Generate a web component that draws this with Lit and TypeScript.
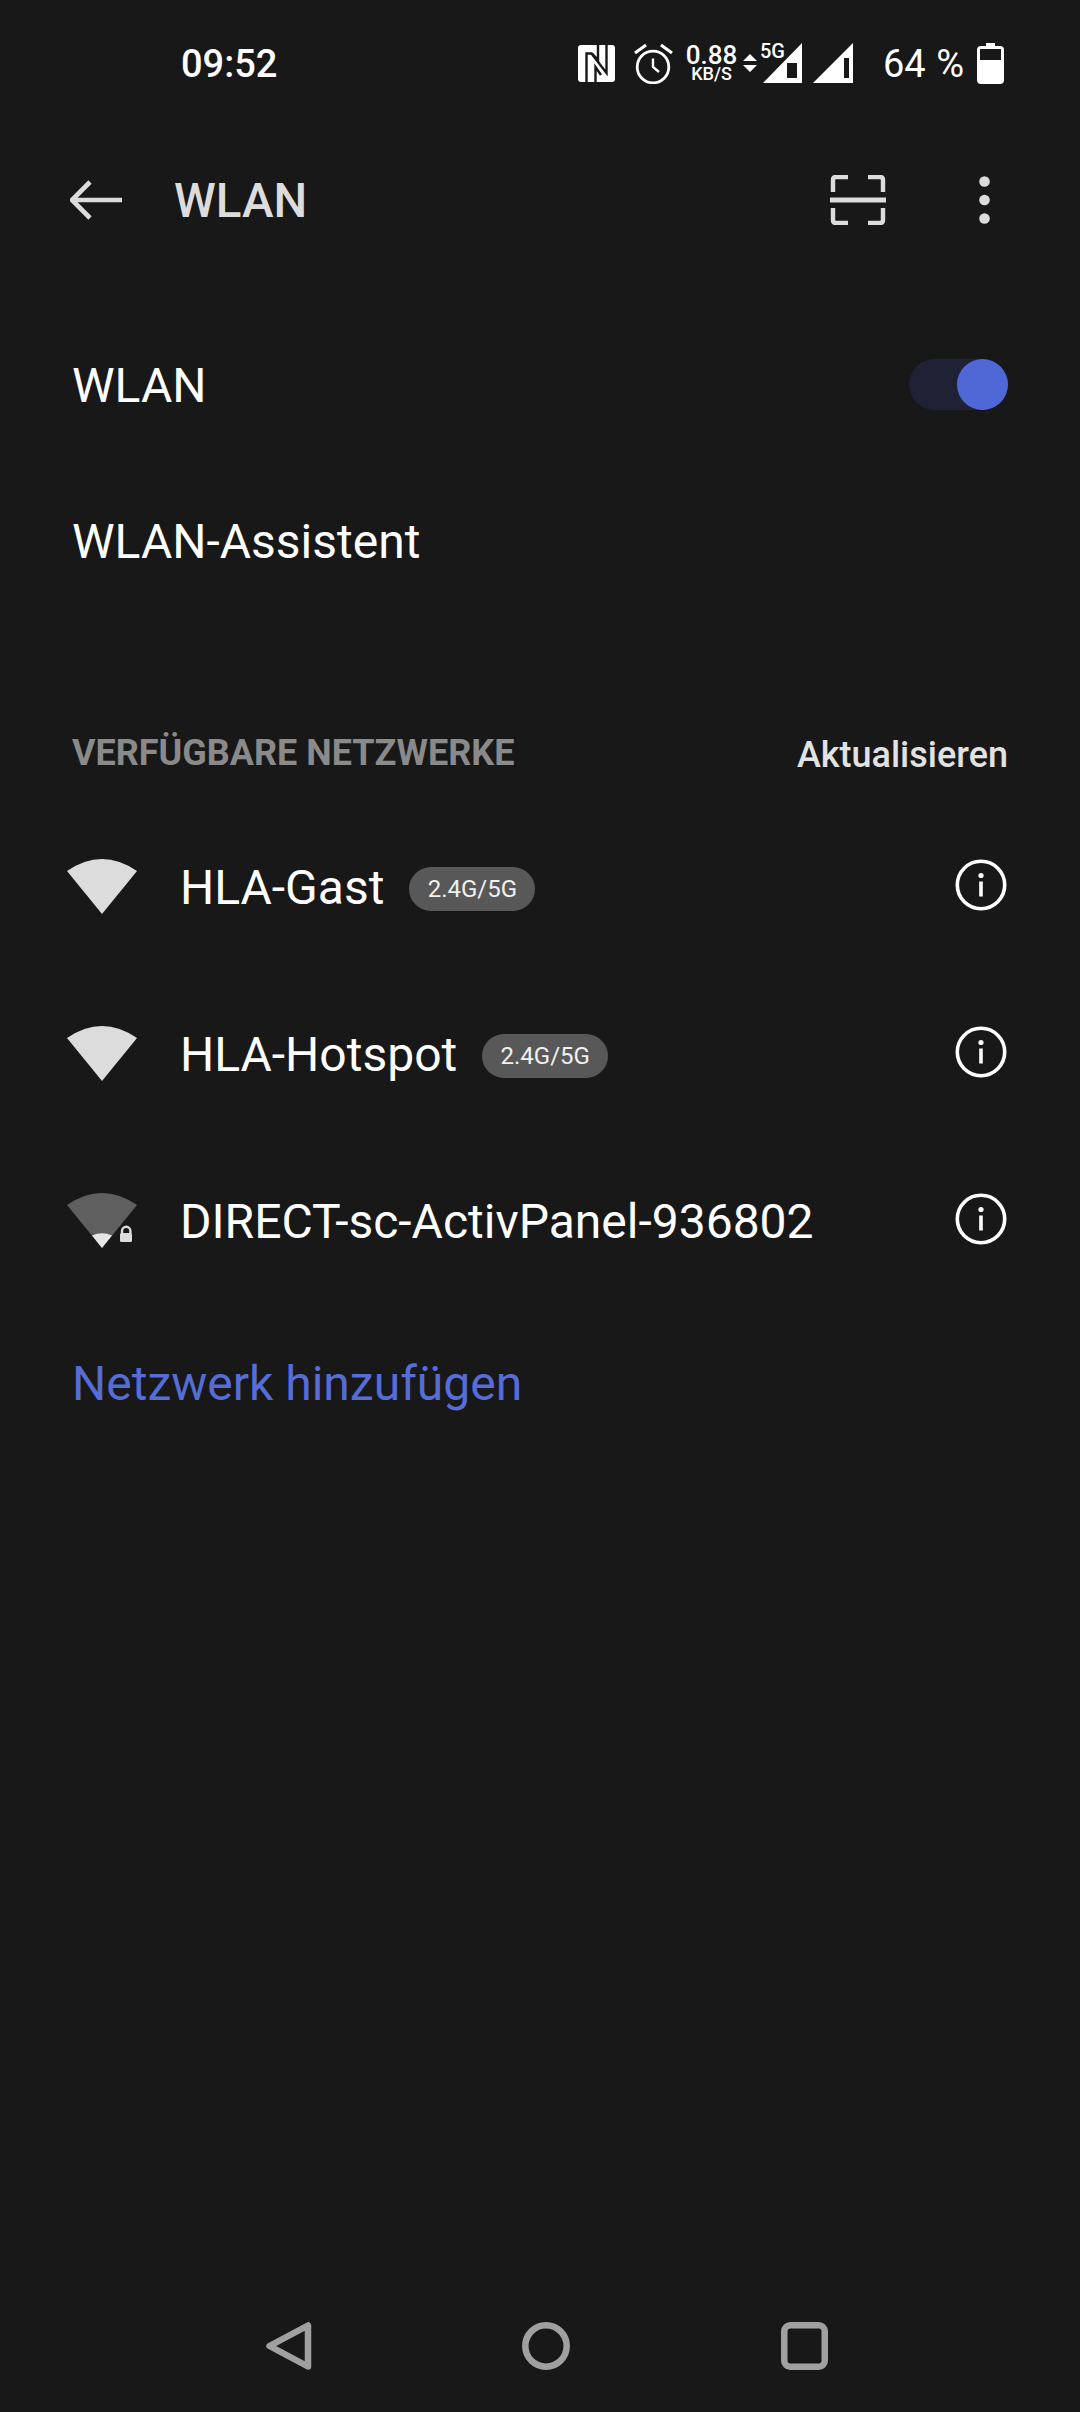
import { LitElement, html, css, svg } from "lit";
import { customElement } from "lit/decorators.js";

const wifiFull = svg`<path d="M0 12 Q35 -12 70 12 L35 55 Z" fill="#dcdcdc"/>`;
const wifiWeak = svg`<path d="M0 12 Q35 -12 70 12 L35 55 Z" fill="#5f5f5f"/>
  <path d="M25 42.5 Q35 38 45 42.5 L35 55 Z" fill="#e6e6e6"/>
  <path d="M55 41 v-3 a4.2 4.2 0 0 1 8.4 0 v3" fill="none" stroke="#dcdcdc" stroke-width="2.4"/>
  <rect x="53" y="40" width="12" height="9" rx="1.5" fill="#dcdcdc"/>`;

@customElement("app-root")
export class AppRoot extends LitElement {
  static styles = css`
    :host {
      display: flex;
      flex-direction: column;
      width: 1080px;
      height: 2412px;
      background: #181818;
      color: #fff;
      font-family: Roboto, "Noto Sans", sans-serif;
      overflow: hidden;
    }
    svg { display: block; flex: none; }
    .status {
      height: 126px;
      display: flex;
      align-items: center;
      padding: 0 76px 0 181px;
      box-sizing: border-box;
    }
    .time { font-size: 38px; font-weight: 500; color: #fff; flex: 1; margin-top: 2px; }
    .nfc { margin-right: 19px; }
    .alarm { margin-right: 13px; }
    .speed {
      display: flex;
      flex-direction: column;
      align-items: center;
      width: 51px;
      margin-right: 6px;
    }
    .speed b { font-size: 26px; font-weight: 500; height: 22px; line-height: 22px; }
    .speed i { font-style: normal; font-weight: 500; font-size: 18px; height: 16px; line-height: 16px; }
    .arrows { margin-right: 3px; }
    .net { position: relative; margin-right: 10px; }
    .five-g {
      position: absolute;
      left: 0;
      top: -1px;
      font-size: 20px;
      line-height: 18px;
      font-weight: 500;
    }
    .sim2 { margin-right: 30px; }
    .pct { font-size: 38px; font-weight: 400; width: 81px; margin-right: 13px; margin-top: 2px; white-space: nowrap; word-spacing: 1px; }
    .header {
      height: 148px;
      display: flex;
      align-items: center;
      padding: 0 90px 0 70px;
      box-sizing: border-box;
    }
    .title {
      margin-left: 52px;
      margin-top: 2px;
      font-size: 47.5px;
      font-weight: 500;
      color: #dcdcdc;
      flex: 1;
    }
    .scan { margin-right: 93px; }
    .row {
      display: flex;
      align-items: center;
      justify-content: space-between;
      padding: 0 72px;
      font-size: 48px;
      height: 156px;
      box-sizing: border-box;
    }
    .first { margin-top: 33px; }
    .track {
      width: 99px;
      height: 51px;
      border-radius: 26px;
      background: #1f2235;
      display: flex;
      justify-content: flex-end;
      margin-bottom: 2px;
    }
    .knob { width: 51px; height: 51px; border-radius: 50%; background: #4f68d6; }
    .section {
      height: 185px;
      box-sizing: border-box;
      padding: 0 72px 30px;
      display: flex;
      align-items: flex-end;
      justify-content: space-between;
    }
    .section-title { font-size: 36px; font-weight: 700; color: #8a8a8a; }
    .refresh { font-size: 36px; font-weight: 500; color: #e2e2e2; margin-bottom: -2px; }
    .net-row {
      height: 167px;
      display: flex;
      align-items: center;
      padding: 0 73px 0 67px;
      box-sizing: border-box;
      font-size: 48px;
    }
    .wifi { margin-right: 43px; margin-bottom: 2px; }
    .name { white-space: nowrap; }
    .badge {
      margin-left: 25px;
      margin-top: 2px;
      height: 44px;
      width: 126px;
      border-radius: 22px;
      background: #585858;
      font-size: 24px;
      display: flex;
      align-items: center;
      justify-content: center;
      color: #f0f0f0;
    }
    .info { margin-left: auto; margin-bottom: 6px; }
    .add {
      height: 156px;
      display: flex;
      align-items: center;
      padding-left: 72px;
      font-size: 48px;
      color: #566cd6;
    }
    .nav {
      margin-top: auto;
      height: 132px;
      display: flex;
      padding: 0 0 42px 266px;
      box-sizing: border-box;
      align-items: flex-end;
    }
    .nav .home { margin-left: 210px; }
    .nav .recent { margin-left: 211px; }
  `;

  private network(name: string, weak: boolean, badge: boolean) {
    return html`<div class="net-row">
      <svg class="wifi" width="70" height="56" viewBox="0 0 70 56">${weak ? wifiWeak : wifiFull}</svg>
      <span class="name">${name}</span>
      ${badge ? html`<span class="badge">2.4G/5G</span>` : ""}
      <svg class="info" width="52" height="52" viewBox="0 0 52 52" fill="none">
        <circle cx="26" cy="26" r="23.7" stroke="#fff" stroke-width="3.6"/>
        <circle cx="26" cy="16.5" r="2.6" fill="#fff"/>
        <rect x="24.2" y="22.5" width="3.6" height="15" fill="#fff"/>
      </svg>
    </div>`;
  }

  render() {
    return html`
      <div class="status">
        <span class="time">09:52</span>
        <svg class="nfc" width="37" height="37" viewBox="0 0 37 37">
          <rect width="37" height="37" rx="3" fill="#fff"/>
          <path d="M8.5 37V8.5H13.5L28.5 28V0" fill="none" stroke="#181818" stroke-width="2.4"/>
          <path d="M17.5 37V22L23 30M20 0V15L14 8.5" fill="none" stroke="#181818" stroke-width="2.4"/>
        </svg>
        <svg class="alarm" width="39" height="41" viewBox="0 0 39 41" fill="none" stroke="#fff">
          <circle cx="19" cy="24" r="15.8" stroke-width="2.8"/>
          <path d="M19 15.5V24L25 29" stroke-width="2.4"/>
          <path d="M1 10L12 2M27 2L38 10" stroke-width="3"/>
        </svg>
        <div class="speed"><b>0.88</b><i>KB/S</i></div>
        <svg class="arrows" width="14" height="30" viewBox="0 0 14 30">
          <path d="M7 6L14 13H0ZM0 17H14L7 24Z" fill="#fff"/>
        </svg>
        <div class="net">
          <svg width="43" height="40" viewBox="0 0 43 40">
            <path d="M3 40L42 0V40ZM27 35H37V20H27Z" fill="#fff" fill-rule="evenodd"/>
          </svg>
          <span class="five-g">5G</span>
        </div>
        <svg class="sim2" width="40" height="40" viewBox="0 0 40 40">
          <path d="M0 40L40 0V40ZM31 35H36V15H31Z" fill="#fff" fill-rule="evenodd"/>
        </svg>
        <span class="pct">64 %</span>
        <svg width="27" height="41" viewBox="0 0 27 41">
          <path d="M9 0H18V3H23Q27 3 27 7V37Q27 41 23 41H4Q0 41 0 37V7Q0 3 4 3H9Z" fill="#fff"/>
          <rect x="3" y="6" width="21" height="11" fill="#181818"/>
        </svg>
      </div>

      <div class="header">
        <svg width="52" height="40" viewBox="0 0 52 40" fill="none" stroke="#dcdcdc" stroke-width="4.6">
          <path d="M52 20H3M20 2L2 20L20 38"/>
        </svg>
        <span class="title">WLAN</span>
        <svg class="scan" width="56" height="50" viewBox="0 0 56 50" fill="none" stroke="#dcdcdc">
          <path d="M18 2H6Q3 2 3 5V17M38 2H50Q53 2 53 5V17M3 33V45Q3 48 6 48H18M53 33V45Q53 48 50 48H38" stroke-width="4.4"/>
          <path d="M0 25H56" stroke-width="5"/>
        </svg>
        <svg width="11" height="48" viewBox="0 0 11 48" fill="#dcdcdc">
          <circle cx="5.5" cy="5.5" r="5.3"/><circle cx="5.5" cy="24" r="5.3"/><circle cx="5.5" cy="42.5" r="5.3"/>
        </svg>
      </div>

      <div class="row first"><span>WLAN</span><div class="track"><div class="knob"></div></div></div>
      <div class="row"><span>WLAN-Assistent</span></div>

      <div class="section">
        <span class="section-title">VERFÜGBARE NETZWERKE</span>
        <span class="refresh">Aktualisieren</span>
      </div>

      ${this.network("HLA-Gast", false, true)}
      ${this.network("HLA-Hotspot", false, true)}
      ${this.network("DIRECT-sc-ActivPanel-936802", true, false)}

      <div class="add">Netzwerk hinzufügen</div>

      <div class="nav">
        <svg width="46" height="48" viewBox="0 0 46 48" fill="none" stroke="#a0a0a0" stroke-width="6.5" stroke-linejoin="round">
          <path d="M3.5 24L42 3.5V44.5Z"/>
        </svg>
        <svg class="home" width="48" height="48" viewBox="0 0 48 48" fill="none" stroke="#a0a0a0" stroke-width="6.5">
          <circle cx="24" cy="24" r="20.7"/>
        </svg>
        <svg class="recent" width="47" height="48" viewBox="0 0 47 48" fill="none" stroke="#a0a0a0" stroke-width="6.5">
          <rect x="3.25" y="3.25" width="40.5" height="41.5" rx="6"/>
        </svg>
      </div>
    `;
  }
}
